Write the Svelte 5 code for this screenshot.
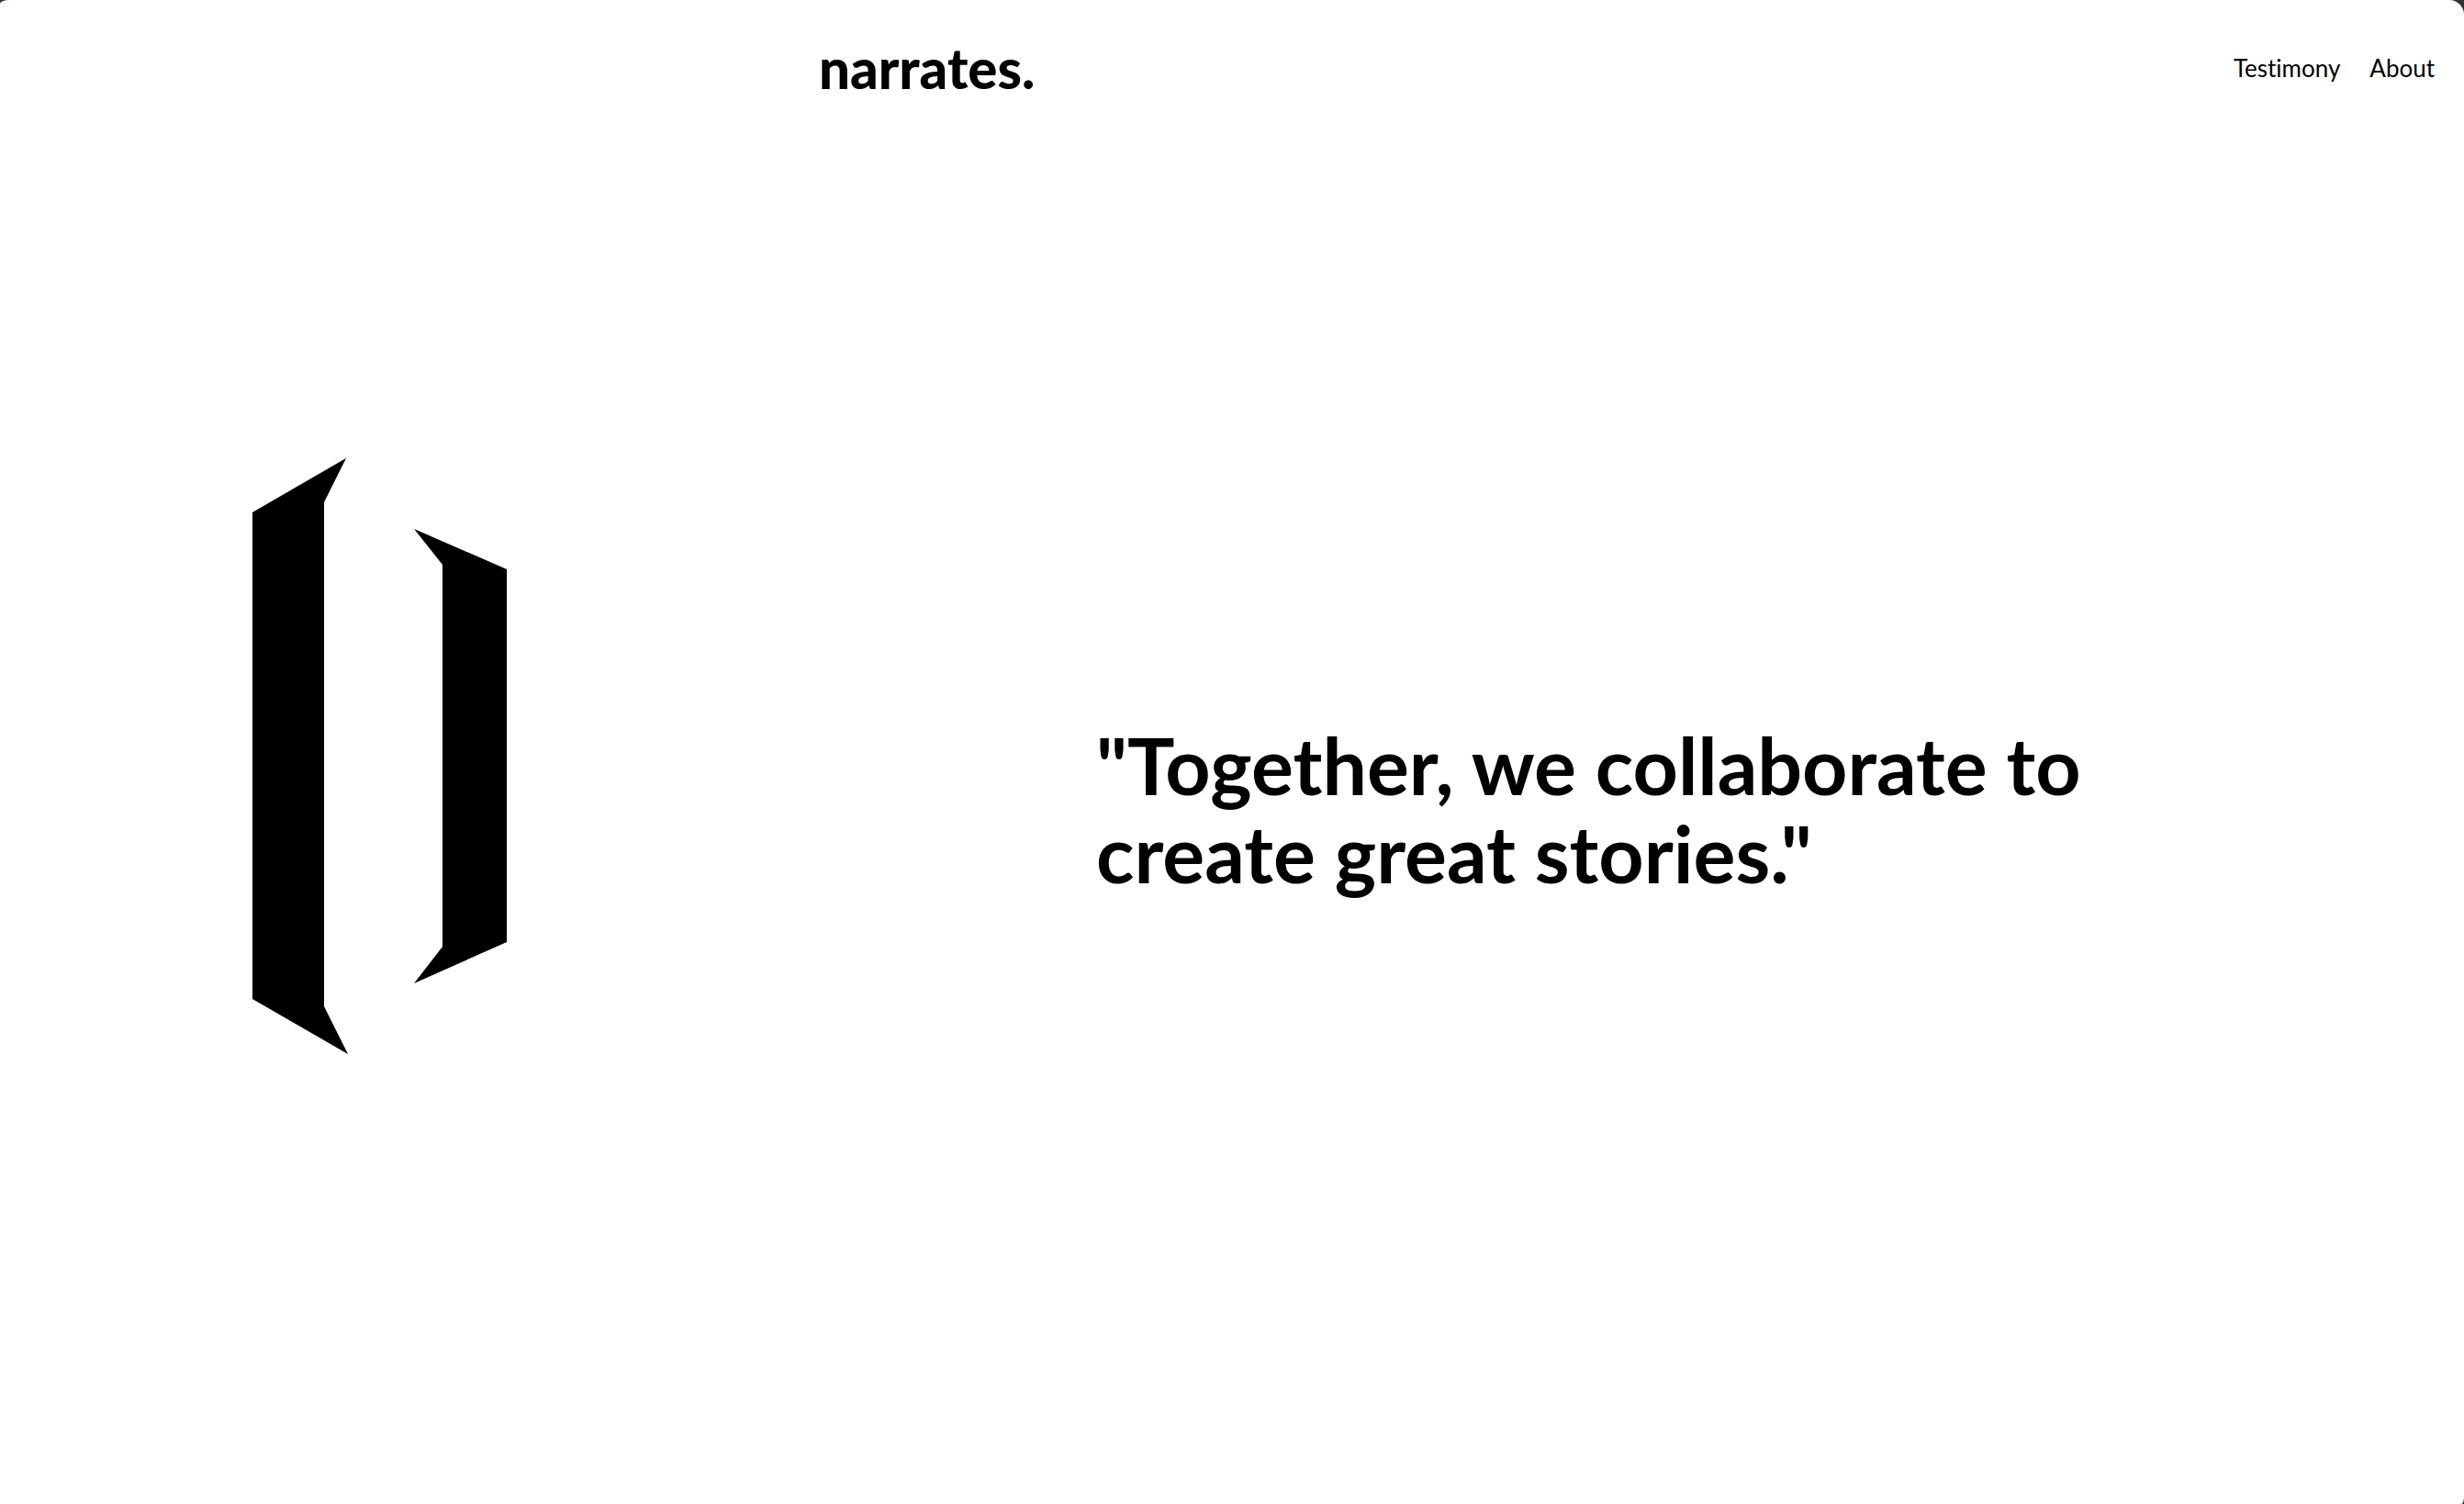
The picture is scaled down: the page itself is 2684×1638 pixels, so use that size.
<script>
  const links = [
    { label: 'Testimony', href: '#testimony' },
    { label: 'About', href: '#about' }
  ];
</script>

<div class="page">
  <header class="header">
    <a class="brand" href="#home">narrates.</a>
    <nav class="nav" aria-label="Main">
      {#each links as link}
        <a href={link.href}>{link.label}</a>
      {/each}
    </nav>
  </header>

  <main class="hero">
    <svg class="mark" viewBox="0 0 278 649" role="img" aria-label="Narrates emblem">
      <path d="M0 59 L102 0 L78 48 V597 L104 649 L0 589 Z" />
      <path d="M176 77 L277 121 V527 L176 572 L207 532 V116 Z" />
    </svg>
    <h1 class="quote">"Together, we collaborate to create great stories."</h1>
  </main>
</div>

<style>
  :global(body) {
    margin: 0;
    background: #333333;
  }

  .page {
    display: flex;
    flex-direction: column;
    min-height: 100vh;
    background: #ffffff;
    border-radius: 10px 16px 3px 0 / 4px 16px 8px 0;
    color: #000000;
    font-family: Lato, 'Liberation Sans', sans-serif;
    font-variant-ligatures: none;
  }

  .header {
    display: grid;
    grid-template-columns: 1fr 1fr 1fr;
    align-items: center;
    padding: 38px 32px 36px 12px;
  }

  .header a {
    color: inherit;
    text-decoration: none;
  }

  .brand {
    grid-column: 2;
    font-family: 'Lato Black', Lato, 'Liberation Sans', sans-serif;
    font-size: 60px;
    line-height: 72px;
    font-weight: 900;
  }

  .nav {
    display: flex;
    justify-content: flex-end;
    gap: 32px;
    font-size: 26px;
    line-height: 32px;
  }

  .hero {
    flex: 1;
    display: grid;
    grid-template-columns: 828fr 1856fr;
    align-items: center;
    padding-bottom: 138px;
  }

  .mark {
    width: 278px;
    justify-self: center;
    fill: #000000;
  }

  .quote {
    max-width: 1150px;
    margin: 0;
    padding: 116px 32px 0 366px;
    font-size: 86px;
    line-height: 96px;
    font-weight: 700;
  }
</style>
